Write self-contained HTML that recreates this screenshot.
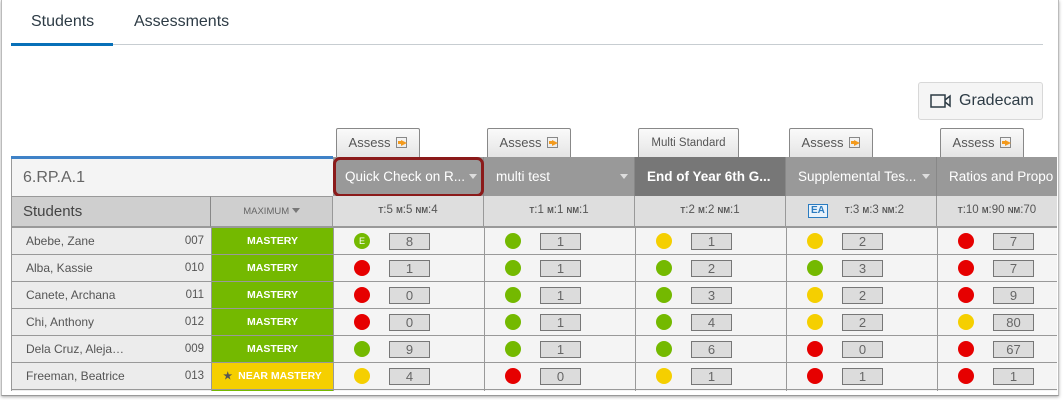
<!DOCTYPE html>
<html><head><meta charset="utf-8"><style>
*{box-sizing:border-box;margin:0;padding:0}
html,body{width:1063px;height:400px;overflow:hidden}
body{background:#fff;font-family:"Liberation Sans",sans-serif;position:relative}
.frame{position:absolute;left:1px;top:0;width:1058px;height:396px;border-left:1px solid #bbb;border-right:1px solid #bbb;border-bottom:1px solid #999;box-shadow:0 1px 3px #aaa}
.a{position:absolute}
.tab{font-size:16px;color:#2d3b45;top:13px}
.as{position:absolute;top:128px;height:30px;border:1px solid #888;border-bottom:none;background:linear-gradient(#fafafa,#e4e4e4);font-size:13px;color:#555;text-align:center;line-height:28px;border-radius:2px 2px 0 0}
.ic{display:inline-block;width:11px;height:11px;border:1px solid #888;margin-left:6px;vertical-align:-1px;position:relative}
.ic:after{content:"";position:absolute;left:4px;top:2px;width:0;height:0;border-left:6px solid #f39a1d;border-top:3px solid transparent;border-bottom:3px solid transparent}
.ic:before{content:"";position:absolute;left:1px;top:3px;width:4px;height:3px;background:#f39a1d}
.clip{position:absolute;left:11px;top:227px;width:1046px;height:164px;overflow:hidden}
table{border-collapse:collapse;table-layout:fixed}
td{height:27px;border:1px solid #999;background:#f4f4f4;font-size:12px;color:#555;position:relative;padding:0}
td.n{background:#ececec;padding-left:14px;font-size:12px}
td.n span{position:absolute;right:7px;top:7px;font-size:11.5px}
td.m{background:#74b900;color:#fff;font-weight:bold;text-align:center;font-size:10.5px}
td.y{background:#f5cf00}
.d{position:absolute;left:20px;top:5px;width:16px;height:16px;border-radius:50%}
.g{background:#74b900}.r{background:#e60000}.o{background:#f5cf00}
.b{position:absolute;left:55px;top:5px;width:41px;height:17px;border:1px solid #777;background:#dcdcdc;text-align:center;font-size:13px;line-height:15px;color:#666}
.h{position:absolute;top:157px;height:39px;background:#999;color:#fff;font-size:13.5px;line-height:39px;padding-left:12px;border-right:1px solid #888;white-space:nowrap;overflow:hidden}
.h i{position:absolute;right:6px;top:17px;border-left:4px solid transparent;border-right:4px solid transparent;border-top:5px solid #ddd}
.mt{position:absolute;top:196px;height:31px;background:#dedede;border-right:1px solid #999;border-bottom:1px solid #999;text-align:center;font-size:11.5px;color:#555;line-height:29px}
.mt small{font-size:8px;font-weight:bold}
</style></head><body>
<div class="frame"></div>
<div class="a tab" style="left:31px">Students</div>
<div class="a tab" style="left:134px">Assessments</div>
<div class="a" style="left:11px;top:44px;width:1032px;height:1px;background:#c7cdd1"></div>
<div class="a" style="left:11px;top:43px;width:102px;height:3px;background:#0770b8"></div>
<div class="a" style="left:918px;top:82px;width:125px;height:38px;border:1px solid #d8d8d8;border-radius:3px;background:#f5f5f5;font-size:16px;color:#2d3b45;line-height:36px;padding-left:40px">Gradecam</div>
<svg class="a" style="left:930px;top:93px" width="22" height="16" viewBox="0 0 22 16"><rect x="1" y="2" width="14" height="12" fill="none" stroke="#2d3b45" stroke-width="1.5"/><path d="M15 7 L20 3 V13 L15 9" fill="none" stroke="#2d3b45" stroke-width="1.5"/></svg>
<div class="as" style="left:336px;width:84px">Assess<span class="ic"></span></div>
<div class="as" style="left:487px;width:84px">Assess<span class="ic"></span></div>
<div class="as" style="left:638px;width:101px;font-size:11.5px">Multi Standard</div>
<div class="as" style="left:789px;width:84px">Assess<span class="ic"></span></div>
<div class="as" style="left:940px;width:84px">Assess<span class="ic"></span></div>
<div class="a" style="left:11px;top:156px;width:322px;height:3px;background:#3f82c7"></div>
<div class="a" style="left:11px;top:159px;width:322px;height:37px;background:#f4f4f4;border-left:1px solid #999;font-size:16px;color:#666;line-height:37px;padding-left:11px">6.RP.A.1</div>
<div class="a" style="left:11px;top:196px;width:200px;height:31px;background:#cfcfcf;border:1px solid #999;font-size:15px;color:#444;line-height:29px;padding-left:11px">Students</div>
<div class="a" style="left:210px;top:196px;width:123px;height:31px;background:#cfcfcf;border:1px solid #999;border-left:1px solid #888;font-size:9.5px;color:#666;line-height:29px;text-align:center">MAXIMUM <span style="display:inline-block;border-left:4px solid transparent;border-right:4px solid transparent;border-top:5px solid #777;vertical-align:1px"></span></div>
<div class="h" style="left:333px;width:151px">Quick Check on R...<i></i></div>
<div class="a" style="left:333px;top:157px;width:151px;height:40px;border:3px solid #8b1a1a;border-radius:7px"></div>
<div class="h" style="left:484px;width:151px">multi test<i></i></div>
<div class="h" style="left:635px;width:151px;background:#777;font-weight:bold">End of Year 6th G...</div>
<div class="h" style="left:786px;width:151px">Supplemental Tes...<i></i></div>
<div class="h" style="left:937px;width:120px;border:none">Ratios and Propo</div>
<div class="mt" style="left:333px;width:151px"><small>T</small>:5 <small>M</small>:5 <small>NM</small>:4</div>
<div class="mt" style="left:484px;width:151px"><small>T</small>:1 <small>M</small>:1 <small>NM</small>:1</div>
<div class="mt" style="left:635px;width:151px"><small>T</small>:2 <small>M</small>:2 <small>NM</small>:1</div>
<div class="mt" style="left:786px;width:151px"><span style="display:inline-block;border:1px solid #2a7bc0;color:#2a7bc0;font-weight:bold;font-size:10px;line-height:12px;padding:0 2px;background:#e8f2fb;margin-right:7px;position:relative;left:-10px">EA</span><small>T</small>:3 <small>M</small>:3 <small>NM</small>:2</div>
<div class="mt" style="left:937px;width:120px;border-right:none"><small>T</small>:10 <small>M</small>:90 <small>NM</small>:70</div>
<div class="clip">
<table style="width:1047px">
<colgroup><col style="width:200px"><col style="width:122px"><col style="width:151px"><col style="width:151px"><col style="width:151px"><col style="width:151px"><col style="width:121px"></colgroup>
<tr><td class="n">Abebe, Zane<span>007</span></td><td class="m">MASTERY</td><td><div class="d g" style="color:#fff;font-size:9px;text-align:center;line-height:16px">E</div><div class="b">8</div></td><td><div class="d g"></div><div class="b">1</div></td><td><div class="d o"></div><div class="b">1</div></td><td><div class="d o"></div><div class="b">2</div></td><td><div class="d r"></div><div class="b">7</div></td></tr>
<tr><td class="n">Alba, Kassie<span>010</span></td><td class="m">MASTERY</td><td><div class="d r"></div><div class="b">1</div></td><td><div class="d g"></div><div class="b">1</div></td><td><div class="d g"></div><div class="b">2</div></td><td><div class="d g"></div><div class="b">3</div></td><td><div class="d r"></div><div class="b">7</div></td></tr>
<tr><td class="n">Canete, Archana<span>011</span></td><td class="m">MASTERY</td><td><div class="d r"></div><div class="b">0</div></td><td><div class="d g"></div><div class="b">1</div></td><td><div class="d g"></div><div class="b">3</div></td><td><div class="d o"></div><div class="b">2</div></td><td><div class="d r"></div><div class="b">9</div></td></tr>
<tr><td class="n">Chi, Anthony<span>012</span></td><td class="m">MASTERY</td><td><div class="d r"></div><div class="b">0</div></td><td><div class="d g"></div><div class="b">1</div></td><td><div class="d g"></div><div class="b">4</div></td><td><div class="d o"></div><div class="b">2</div></td><td><div class="d o"></div><div class="b">80</div></td></tr>
<tr><td class="n">Dela Cruz, Aleja…<span>009</span></td><td class="m">MASTERY</td><td><div class="d g"></div><div class="b">9</div></td><td><div class="d g"></div><div class="b">1</div></td><td><div class="d g"></div><div class="b">6</div></td><td><div class="d r"></div><div class="b">0</div></td><td><div class="d r"></div><div class="b">67</div></td></tr>
<tr><td class="n">Freeman, Beatrice<span>013</span></td><td class="m y"><span style="color:#555;font-size:10px;margin-right:6px">★</span>NEAR MASTERY</td><td><div class="d o"></div><div class="b">4</div></td><td><div class="d r"></div><div class="b">0</div></td><td><div class="d o"></div><div class="b">1</div></td><td><div class="d r"></div><div class="b">1</div></td><td><div class="d r"></div><div class="b">1</div></td></tr>
<tr><td class="n"></td><td class="m"></td><td></td><td></td><td></td><td></td><td></td></tr>
</table>
</div>
</body></html>
